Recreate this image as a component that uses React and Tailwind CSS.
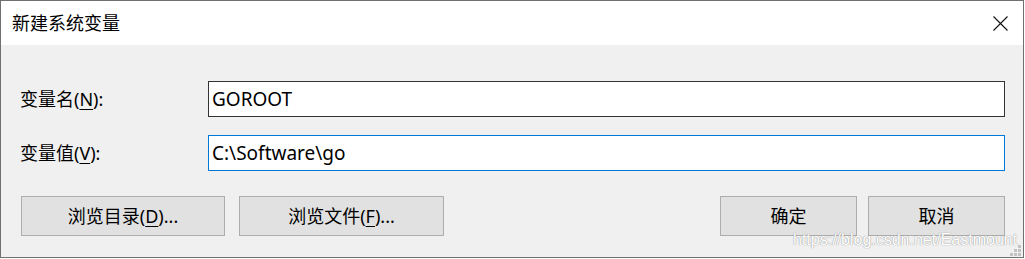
import React from 'react'

const cjk = { fontFamily: '"Noto Sans", "Noto Sans CJK SC", sans-serif' }

function Mn({ children }) {
  return <span className="underline underline-offset-[3px] decoration-1">{children}</span>
}

function Field({ label, hotkey, value, focused }) {
  return (
    <div className="flex items-center">
      <div className="w-[188px] text-[18px] leading-[24px] text-black">
        {label}(<Mn>{hotkey}</Mn>):
      </div>
      <div
        className={`flex-1 h-[36px] bg-white border flex items-center pl-[3px] text-[19px] text-black ${
          focused ? 'border-[#0078d7]' : 'border-[#333333]'
        }`}
      >
        {value}
      </div>
    </div>
  )
}

function Btn({ children, width }) {
  return (
    <button
      className={`${width} h-[40px] bg-[#e1e1e1] border border-[#adadad] text-[18px] leading-[24px] text-black flex items-center justify-center`}
    >
      {children}
    </button>
  )
}

export default function App() {
  return (
    <div className="w-[1025px] h-[259px] bg-white overflow-hidden" style={cjk}>
      <div className="relative w-[1024px] h-[258px] border border-[#707070] flex flex-col">
        {/* Title bar */}
        <div className="h-[44px] bg-white flex items-center justify-between pl-[11px] pr-[15px]">
          <span className="text-[18px] leading-[24px] text-black">新建系统变量</span>
          <svg width="15" height="15" viewBox="0 0 15 15">
            <path d="M0.5 0.5 L14.5 14.5 M14.5 0.5 L0.5 14.5" stroke="#111" strokeWidth="1.1" />
          </svg>
        </div>

        {/* Body */}
        <div className="flex-1 bg-[#f0f0f0] pt-[36px] pl-[19px] pr-[18px]">
          <div className="flex flex-col gap-[18px]">
            <Field label="变量名" hotkey="N" value="GOROOT" />
            <Field label="变量值" hotkey="V" value="C:\Software\go" focused />
          </div>

          <div className="flex items-center mt-[25px] pl-[1px]">
            <div className="flex gap-[14px]">
              <Btn width="w-[204px]">
                浏览目录(<Mn>D</Mn>)...
              </Btn>
              <Btn width="w-[205px]">
                浏览文件(<Mn>F</Mn>)...
              </Btn>
            </div>
            <div className="ml-auto flex gap-[11px]">
              <Btn width="w-[137px]">确定</Btn>
              <Btn width="w-[137px]">取消</Btn>
            </div>
          </div>
        </div>

        {/* watermark */}
        <div
          className="absolute left-[792px] top-[229px] text-[16px] leading-[20px] text-white [text-shadow:0_0_1px_#9a9a9a,0_0_1px_#9a9a9a]"
          style={{ fontFamily: '"Liberation Sans", Arial, sans-serif' }}
        >
          https://blog.csdn.net/Eastmount
        </div>

        {/* size grip */}
        <svg className="absolute right-[2px] bottom-[1px]" width="11" height="11" viewBox="0 0 11 11">
          <rect x="8" y="0" width="3" height="3" fill="#c2c2c2" />
          <rect x="4" y="4" width="3" height="3" fill="#c2c2c2" />
          <rect x="8" y="4" width="3" height="3" fill="#c2c2c2" />
          <rect x="0" y="8" width="3" height="3" fill="#c2c2c2" />
          <rect x="4" y="8" width="3" height="3" fill="#c2c2c2" />
          <rect x="8" y="8" width="3" height="3" fill="#c2c2c2" />
        </svg>
      </div>
    </div>
  )
}
